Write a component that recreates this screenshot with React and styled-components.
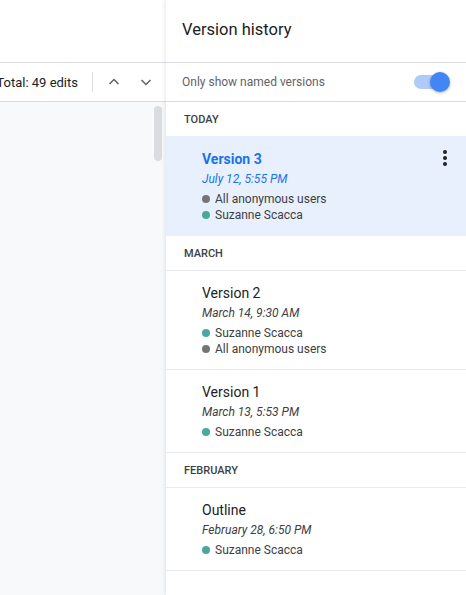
import React from 'react'
import { styled, createGlobalStyle } from 'styled-components'

const GlobalStyle = createGlobalStyle`
  * { box-sizing: border-box; }
  html, body { margin: 0; padding: 0; background: #fff; }
  body { font-family: Roboto, 'Liberation Sans', Arial, sans-serif; }
`

const sections = [
  {
    label: 'TODAY',
    versions: [
      {
        name: 'Version 3',
        date: 'July 12, 5:55 PM',
        users: [
          { name: 'All anonymous users', kind: 'anon' },
          { name: 'Suzanne Scacca', kind: 'user' }
        ],
        selected: true
      }
    ]
  },
  {
    label: 'MARCH',
    versions: [
      {
        name: 'Version 2',
        date: 'March 14, 9:30 AM',
        users: [
          { name: 'Suzanne Scacca', kind: 'user' },
          { name: 'All anonymous users', kind: 'anon' }
        ]
      },
      {
        name: 'Version 1',
        date: 'March 13, 5:53 PM',
        users: [{ name: 'Suzanne Scacca', kind: 'user' }]
      }
    ]
  },
  {
    label: 'FEBRUARY',
    versions: [
      {
        name: 'Outline',
        date: 'February 28, 6:50 PM',
        users: [{ name: 'Suzanne Scacca', kind: 'user' }]
      }
    ]
  }
]

function Chevron ({ down }) {
  return (
    <svg width='12' height='12' viewBox='0 0 12 12'>
      <path
        d={down ? 'M1.5 4 L6 8.5 L10.5 4' : 'M1.5 8 L6 3.5 L10.5 8'}
        fill='none'
        stroke='#5f6368'
        strokeWidth='1.5'
      />
    </svg>
  )
}

function VersionItem ({ version }) {
  return (
    <Item $selected={version.selected}>
      <ItemBody>
        <Title $selected={version.selected}>{version.name}</Title>
        <DateLine $selected={version.selected}>{version.date}</DateLine>
        <Users>
          {version.users.map((u, i) => (
            <User key={i}>
              <Dot $kind={u.kind} />
              {u.name}
            </User>
          ))}
        </Users>
      </ItemBody>
      {version.selected && (
        <Kebab>
          <span />
          <span />
          <span />
        </Kebab>
      )}
    </Item>
  )
}

function App () {
  return (
    <>
      <GlobalStyle />
      <Page>
        <DocPane>
          <DocTop />
          <DocToolbar>
            <Total>Total: 49 edits</Total>
            <Divider />
            <NavButton><Chevron /></NavButton>
            <NavButton><Chevron down /></NavButton>
          </DocToolbar>
          <DocBody>
            <Thumb />
          </DocBody>
        </DocPane>

        <Panel>
          <PanelHeader>Version history</PanelHeader>
          <FilterRow>
            <FilterLabel>Only show named versions</FilterLabel>
            <Toggle>
              <Knob />
            </Toggle>
          </FilterRow>
          {sections.map((s) => (
            <React.Fragment key={s.label}>
              <SectionHeader $flush={s.versions[0].selected}>{s.label}</SectionHeader>
              {s.versions.map((v) => (
                <VersionItem key={v.name} version={v} />
              ))}
            </React.Fragment>
          ))}
        </Panel>
      </Page>
    </>
  )
}

export default App

const Page = styled.div`
  display: flex;
  height: 100vh;
  overflow: hidden;
`

const DocPane = styled.div`
  width: 166px;
  flex-shrink: 0;
  display: flex;
  flex-direction: column;
`

const DocTop = styled.div`
  height: 63px;
  border-bottom: 1px solid #dadce0;
  background: #fff;
`

const DocToolbar = styled.div`
  height: 39px;
  border-bottom: 1px solid #dadce0;
  display: flex;
  align-items: center;
  justify-content: flex-end;
  padding-right: 4px;
  white-space: nowrap;
`

const Total = styled.span`
  flex-shrink: 0;
  font-size: 13px;
  color: #202124;
`

const Divider = styled.div`
  flex-shrink: 0;
  width: 1px;
  height: 20px;
  background: #dadce0;
  margin: 0 5px 0 14px;
`

const NavButton = styled.div`
  flex-shrink: 0;
  width: 32px;
  height: 24px;
  display: flex;
  align-items: center;
  justify-content: center;
`

const DocBody = styled.div`
  flex: 1;
  background: #f8f9fa;
  display: flex;
  justify-content: flex-end;
  padding: 4px 4px 0 0;
`

const Thumb = styled.div`
  width: 8px;
  height: 55px;
  border-radius: 4px;
  background: #dadce0;
`

const Panel = styled.div`
  flex: 1;
  background: #fff;
  box-shadow: -1px 0 4px rgba(60, 64, 67, 0.12);
  display: flex;
  flex-direction: column;
  position: relative;
`

const PanelHeader = styled.div`
  height: 63px;
  border-bottom: 1px solid #dadce0;
  display: flex;
  align-items: center;
  padding: 0 16px 4px;
  font-size: 16.5px;
  color: #202124;
`

const FilterRow = styled.div`
  height: 39px;
  border-bottom: 1px solid #dadce0;
  display: flex;
  align-items: center;
  justify-content: space-between;
  padding: 0 16px 0 16px;
`

const FilterLabel = styled.span`
  font-size: 12px;
  color: #5f6368;
`

const Toggle = styled.div`
  position: relative;
  width: 34px;
  height: 14px;
  border-radius: 7px;
  background: #aecbfa;
  margin-right: 2px;
`

const Knob = styled.div`
  position: absolute;
  top: -3px;
  right: -2px;
  width: 20px;
  height: 20px;
  border-radius: 50%;
  background: #4285f4;
  box-shadow: 0 1px 3px rgba(0, 0, 0, 0.3);
`

const SectionHeader = styled.div`
  height: ${(p) => (p.$flush ? '34px' : '35px')};
  display: flex;
  align-items: center;
  padding-left: 18px;
  font-size: 11px;
  font-weight: 500;
  color: #3c4043;
  border-bottom: ${(p) => (p.$flush ? 'none' : '1px solid #e8eaed')};
`

const Item = styled.div`
  display: flex;
  align-items: flex-start;
  padding: ${(p) => (p.$selected ? '14px 19px 13px 36px' : '13px 19px 12px 36px')};
  background: ${(p) => (p.$selected ? '#e8f0fe' : '#fff')};
  border-bottom: ${(p) => (p.$selected ? 'none' : '1px solid #e8eaed')};
`

const ItemBody = styled.div`
  flex: 1;
  display: flex;
  flex-direction: column;
`

const Title = styled.div`
  font-size: 14px;
  line-height: 18px;
  font-weight: ${(p) => (p.$selected ? 700 : 400)};
  color: ${(p) => (p.$selected ? '#1a73e8' : '#202124')};
`

const DateLine = styled.div`
  margin-top: 3px;
  font-size: 12px;
  line-height: 16px;
  font-style: italic;
  color: ${(p) => (p.$selected ? '#1a73e8' : '#3c4043')};
`

const Users = styled.div`
  margin-top: 4px;
  display: flex;
  flex-direction: column;
`

const User = styled.div`
  display: flex;
  align-items: center;
  gap: 5px;
  font-size: 12px;
  line-height: 16px;
  color: #3c4043;
`

const Dot = styled.span`
  width: 8px;
  height: 8px;
  border-radius: 50%;
  background: ${(p) => (p.$kind === 'anon' ? '#757575' : '#4aa89b')};
`

const Kebab = styled.div`
  display: flex;
  flex-direction: column;
  gap: 2px;

  span {
    width: 4px;
    height: 4px;
    border-radius: 50%;
    background: #202124;
  }
`
